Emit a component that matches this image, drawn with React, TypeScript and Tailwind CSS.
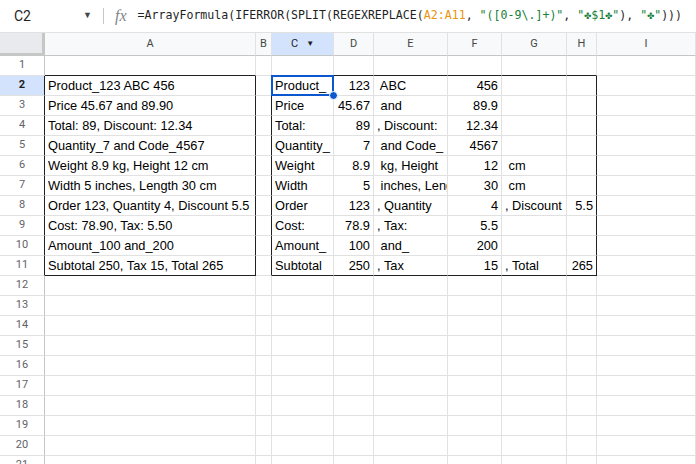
import React from "react";

type Col = { k: string; w: string };

const cols: Col[] = [
  { k: "A", w: "w-[211px]" },
  { k: "B", w: "w-[16px]" },
  { k: "C", w: "w-[62px]" },
  { k: "D", w: "w-[40px]" },
  { k: "E", w: "w-[74px]" },
  { k: "F", w: "w-[54px]" },
  { k: "G", w: "w-[65px]" },
  { k: "H", w: "w-[30px]" },
  { k: "I", w: "flex-1" },
];

const source = [
  "Product_123 ABC 456",
  "Price 45.67 and 89.90",
  "Total: 89, Discount: 12.34",
  "Quantity_7 and Code_4567",
  "Weight 8.9 kg, Height 12 cm",
  "Width 5 inches, Length 30 cm",
  "Order 123, Quantity 4, Discount 5.5",
  "Cost: 78.90, Tax: 5.50",
  "Amount_100 and_200",
  "Subtotal 250, Tax 15, Total 265",
];

// split output C..H for rows 2-11
const split: string[][] = [
  ["Product_", "123", " ABC ", "456"],
  ["Price ", "45.67", " and ", "89.9"],
  ["Total: ", "89", ", Discount: ", "12.34"],
  ["Quantity_", "7", " and Code_", "4567"],
  ["Weight ", "8.9", " kg, Height ", "12", " cm"],
  ["Width ", "5", " inches, Length ", "30", " cm"],
  ["Order ", "123", ", Quantity ", "4", ", Discount ", "5.5"],
  ["Cost: ", "78.9", ", Tax: ", "5.5"],
  ["Amount_", "100", " and_", "200"],
  ["Subtotal ", "250", ", Tax ", "15", ", Total ", "265"],
];

const numCols = ["D", "F", "H"];

function cellValue(row: number, col: string) {
  if (row < 2 || row > 11) return "";
  if (col === "A") return source[row - 2];
  const idx = ["C", "D", "E", "F", "G", "H"].indexOf(col);
  if (idx < 0) return "";
  return split[row - 2][idx] ?? "";
}

function Cell({ row, col }: { row: number; col: Col }) {
  const inRow = row >= 2 && row <= 11;
  const inRange = ["A", "C", "D", "E", "F", "G", "H"].includes(col.k);
  // dark right edge: A range right, left of C range (B), C range right (H)
  const darkRight = inRow && (col.k === "A" || col.k === "B" || col.k === "H");
  const darkBottom = inRange && (row === 1 || row === 11);
  const value = cellValue(row, col.k);
  const isNum = numCols.includes(col.k);
  const selected = row === 2 && col.k === "C";

  return (
    <div
      className={`${col.w} shrink-0 h-full relative border-r border-b whitespace-pre px-[3px] flex items-center text-[12.8px] text-black ${
        selected ? "overflow-visible" : "overflow-hidden"
      } ${isNum ? "justify-end" : "justify-start"} ${
        darkRight ? "border-r-[#202124]" : "border-r-[#e1e1e1]"
      } ${darkBottom ? "border-b-[#202124]" : "border-b-[#e1e1e1]"}`}
    >
      {selected && (
        <div className="absolute -left-px -top-px -right-px -bottom-px border-2 border-[#0b57d0]" />
      )}
      <span className="relative leading-[18px]">{value}</span>
      {selected && (
        <div className="absolute -right-[5px] -bottom-[5px] w-[9px] h-[9px] rounded-full bg-[#0b57d0] border border-white z-10" />
      )}
    </div>
  );
}

export default function App() {
  const rows = Array.from({ length: 21 }, (_, i) => i + 1);

  return (
    <div
      className="w-[696px] h-[464px] overflow-hidden bg-white"
      style={{ fontFamily: '"Liberation Sans", Arial, sans-serif' }}
    >
      {/* Formula bar */}
      <div className="h-[33px] flex items-center border-b border-[#e1e1e1] bg-white">
        <div className="w-[103px] flex items-center pl-[14px] pr-[11px]">
          <span className="text-[14px] text-[#1f1f1f]" style={{ fontFamily: "Roboto, sans-serif" }}>
            C2
          </span>
          <span className="ml-auto text-[9px] text-[#444746]">▼</span>
        </div>
        <div className="w-px h-[16px] bg-[#c4c7c5] mr-[11px]" />
        <span
          className="text-[16px] italic text-[#80868b] mr-[11px] leading-none"
          style={{ fontFamily: '"Liberation Serif", serif' }}
        >
          fx
        </span>
        <div
          className="text-[11.6px] whitespace-pre text-[#1f1f1f]"
          style={{ fontFamily: '"DejaVu Sans Mono", "Liberation Mono", monospace' }}
        >
          <span>=ArrayFormula(IFERROR(SPLIT(REGEXREPLACE(</span>
          <span className="text-[#e8940c]">A2:A11</span>
          <span>, </span>
          <span className="text-[#188038]">"([0-9\.]+)"</span>
          <span>, </span>
          <span className="text-[#188038]">"✤$1✤"</span>
          <span>), </span>
          <span className="text-[#188038]">"✤"</span>
          <span>)))</span>
        </div>
      </div>

      {/* Column headers */}
      <div className="h-[23px] flex text-[11px] text-[#444746]" style={{ fontFamily: "Roboto, sans-serif" }}>
        <div className="w-[45px] shrink-0 bg-[#e8eaed] border-r-[3px] border-b-[3px] border-[#c4c7c5]" />
        {cols.map((c) => (
          <div
            key={c.k}
            className={`${c.w} shrink-0 flex items-center justify-center border-r border-b border-r-[#e1e1e1] border-b-[#c4c7c5] ${
              c.k === "C" ? "bg-[#d3e3fd] text-[#1f1f1f]" : "bg-[#f8f9fa]"
            }`}
          >
            {c.k}
            {c.k === "C" && <span className="ml-[8px] text-[8px]">▼</span>}
          </div>
        ))}
      </div>

      {/* Rows */}
      {rows.map((r) => (
        <div key={r} className="h-[20px] flex">
          <div
            className={`w-[45px] shrink-0 flex items-center justify-center text-[11px] border-b border-r border-b-[#e1e1e1] ${
              r >= 2 && r <= 11 ? "border-r-[#202124]" : "border-r-[#c4c7c5]"
            } ${r === 2 ? "bg-[#d3e3fd] font-bold text-[#1f1f1f]" : "bg-white text-[#5f6368]"}`}
            style={{ fontFamily: "Roboto, sans-serif" }}
          >
            {r}
          </div>
          {cols.map((c) => (
            <Cell key={c.k} row={r} col={c} />
          ))}
        </div>
      ))}
    </div>
  );
}
